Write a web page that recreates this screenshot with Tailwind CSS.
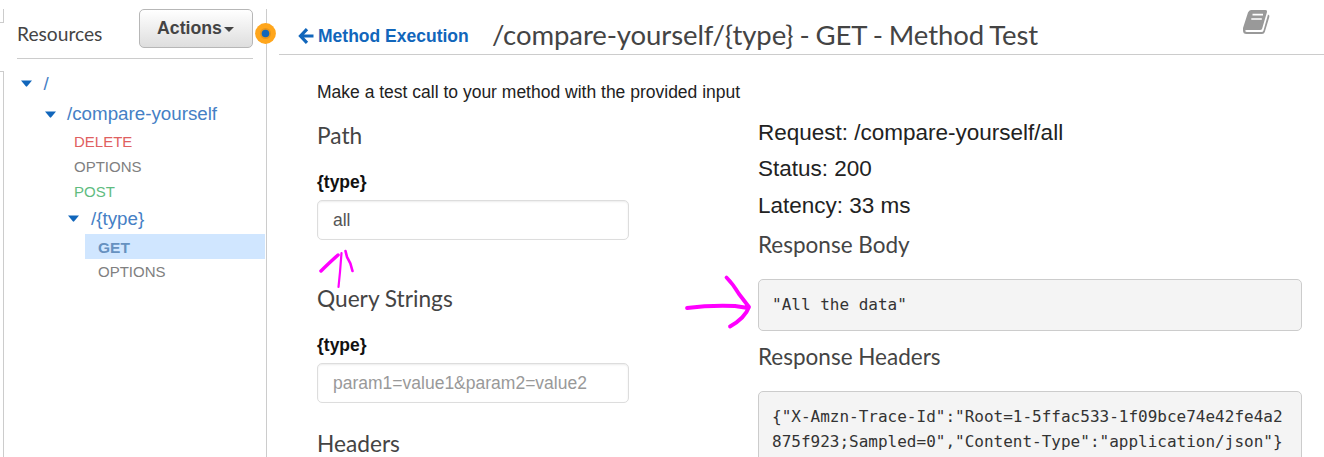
<!DOCTYPE html>
<html lang="en">
<head>
<meta charset="utf-8">
<title>Method Test</title>
<script src="https://cdn.jsdelivr.net/npm/@tailwindcss/browser@4"></script>
</head>
<body class="relative flex h-[457px] w-[1324px] overflow-hidden bg-white font-['Liberation_Sans',sans-serif] text-[17.5px] text-[#222]">
  <!-- collapsed navigation edge -->
  <div class="flex w-1 shrink-0 flex-col justify-between pt-[9px]">
    <div class="h-[14px] border-r border-b border-[#ccc]"></div>
    <div class="h-[386px] border-t border-r border-[#ccc]"></div>
  </div>

  <!-- resource tree -->
  <aside class="mt-[9px] w-[263px] shrink-0 border-r border-[#ccc]">
    <div class="ml-[13px] flex h-[50px] w-[236px] justify-between border-b border-[#ccc]">
      <h2 class="mt-[13px] font-['Lato',sans-serif] text-[19.2px] leading-6 text-[#444]">Resources</h2>
      <button class="flex h-[39px] w-[114px] items-center justify-center gap-[2px] rounded-[5px] border border-[#b7b7b7] bg-linear-to-b from-white to-[#dedede] pr-[1px] pb-[1px] text-[17.7px] font-bold text-[#444]">Actions<svg class="mt-[3px]" width="10" height="5" viewBox="0 0 10 5"><path d="M0 0h10L5 5z" fill="#444"/></svg></button>
    </div>
    <ul class="pt-[9px] text-[18.75px] text-[#4580c5]">
      <li class="flex h-[31px] items-center pl-[16.5px]"><svg class="mr-[12px]" width="11" height="7" viewBox="0 0 11 7"><path d="M0 .5h11L6.200 6.300Q5.500 7 4.800 6.300z" fill="#1166bb"/></svg><span class="pt-[2px]">/</span></li>
      <li class="flex h-[30px] items-center pl-[40.5px]"><svg class="mr-[11.5px]" width="11" height="7" viewBox="0 0 11 7"><path d="M0 .5h11L6.200 6.300Q5.500 7 4.800 6.300z" fill="#1166bb"/></svg>/compare-yourself</li>
      <li class="flex h-[25px] items-center pt-[2px] pl-[70px] text-[15px] text-[#df6060]">DELETE</li>
      <li class="flex h-[25px] items-center pt-[2px] pl-[70px] text-[15px] text-[#808080]">OPTIONS</li>
      <li class="flex h-[25px] items-center pt-[2px] pl-[70px] text-[15px] text-[#5fbc80]">POST</li>
      <li class="flex h-[30px] items-center pl-[64px]"><svg class="mr-[12px] mb-px" width="11" height="7" viewBox="0 0 11 7"><path d="M0 .5h11L6.200 6.300Q5.500 7 4.800 6.300z" fill="#1166bb"/></svg>/{type}</li>
      <li class="mr-[1px] ml-[81px] flex h-[25px] items-center bg-[#d0e6ff] pt-[2px] pl-[13px] text-[15.500px] font-bold text-[#6691c0]">GET</li>
      <li class="flex h-[25px] items-center pt-[2px] pl-[94px] text-[15px] text-[#808080]">OPTIONS</li>
    </ul>
  </aside>

  <!-- method test -->
  <main class="ml-3 h-[457px] flex-1 overflow-hidden">
    <header class="flex h-[55px] items-start border-b border-[#ccc] pl-[19px]">
      <svg class="mt-[28px] mr-[4px]" width="16" height="16" viewBox="0 0 16 16" fill="none" stroke="#1166bb" stroke-width="3.200"><path d="M9 1.200L2.500 8l6.500 6.800M3 8H15.500"/></svg>
      <a class="mt-[24px] w-[174px] text-[17.5px] leading-6 font-bold text-[#1166bb]">Method Execution</a>
      <h1 class="mt-[17px] font-['Lato',sans-serif] text-[27.5px] leading-9 tracking-[-0.08px] whitespace-nowrap text-[#444] [word-spacing:-1px]">/compare-yourself/{type} - GET - Method Test</h1>
      <svg class="mt-[10px] mr-[54px] ml-auto shrink-0" width="27" height="24" viewBox="0 0 27 24"><path d="M8 0H22.500Q24.500 0 24 2L19.200 18.500Q18.700 20 17 20H3.500Q2 20 2.200 21Q2.500 22 4 22H18.500Q20 22 20.500 20.500L25 4.500Q27 5 26.300 7L21.800 22Q21.200 24 19 24H3.500Q0 24 0 20.500V18L5 2.500Q6 0 8 0z" fill="#999"/><path d="M9.500 4.700h10.500M8.300 9h10.500" stroke="#fff" stroke-width="1.700"/></svg>
    </header>
    <div class="pl-[38px]">
      <p class="mt-[25px] h-6 leading-6">Make a test call to your method with the provided input</p>
      <div class="flex">
        <section class="w-[312px]">
          <h3 class="mt-[18px] font-['Lato',sans-serif] text-[22.7px] leading-[28px] text-[#444]">Path</h3>
          <label class="mt-[20px] block h-[30px] leading-6 font-bold text-[#111]">{type}</label>
          <div class="flex h-10 items-center rounded-[5px] border border-[#ddd] pl-[15px] text-[#555] shadow-[inset_0_1px_2px_rgba(0,0,0,0.08)]">all</div>
          <h3 class="mt-[45px] font-['Lato',sans-serif] text-[22.7px] leading-[28px] text-[#444]">Query Strings</h3>
          <label class="mt-[20px] block h-[30px] leading-6 font-bold text-[#111]">{type}</label>
          <div class="flex h-10 items-center rounded-[5px] border border-[#ddd] pl-[15px] text-[#999] shadow-[inset_0_1px_2px_rgba(0,0,0,0.08)]">param1=value1&amp;param2=value2</div>
          <h3 class="mt-[27px] font-['Lato',sans-serif] text-[22.7px] leading-[28px] text-[#444]">Headers</h3>
        </section>
        <section class="ml-[129px] w-[544px]">
          <div class="mt-[11px] text-[22.5px] leading-[36.5px] text-[#222]">
            <p>Request: /compare-yourself/all</p>
            <p class="-mt-px mb-px">Status: 200</p>
            <p>Latency: 33 ms</p>
          </div>
          <h3 class="mt-[6px] font-['Lato',sans-serif] text-[22.5px] leading-[28px] text-[#444]">Response Body</h3>
          <pre class="mt-[20px] h-[52px] rounded-[5px] border border-[#ccc] bg-[#f4f4f4] px-[13px] pt-[12px] font-['DejaVu_Sans_Mono',monospace] text-[16px] leading-[25px] text-[#333]">"All the data"</pre>
          <h3 class="mt-[12px] font-['Lato',sans-serif] text-[22.5px] leading-[28px] text-[#444]">Response Headers</h3>
          <pre class="mt-[20px] h-[90px] rounded-[5px] border border-[#ccc] bg-[#f4f4f4] px-[13px] pt-[12px] font-['DejaVu_Sans_Mono',monospace] text-[16px] leading-[25px] text-[#333]">{"X-Amzn-Trace-Id":"Root=1-5ffac533-1f09bce74e42fe4a2
875f923;Sampled=0","Content-Type":"application/json"}</pre>
        </section>
      </div>
    </div>
  </main>

  <!-- splitter handle -->
  <svg class="absolute top-[23px] left-[255px]" width="21" height="21" viewBox="0 0 21 21"><circle cx="10.500" cy="10.500" r="10.400" fill="#ffa61c"/><circle cx="10.500" cy="10.500" r="5.500" fill="#e8951a"/><circle cx="10.500" cy="10.500" r="3.800" fill="#1166bb"/></svg>

  <!-- hand-drawn arrows -->
  <svg class="absolute top-0 left-0" width="1324" height="457" fill="none" stroke="#ff00ff" stroke-linecap="round" stroke-linejoin="round">
    <path d="M321 271Q328 264 338 255" stroke-width="3.500"/>
    <path d="M341.500 253L340 272L338.500 287" stroke-width="2.200"/>
    <path d="M345.500 251L347 257Q351 263 352.500 271" stroke-width="2.600"/>
    <path d="M687 308Q710 305 735 306L748 308M726.500 277.500Q733 284 739 294L749 307Q745 318 730 326.500" stroke-width="3.800"/>
  </svg>
</body>
</html>
